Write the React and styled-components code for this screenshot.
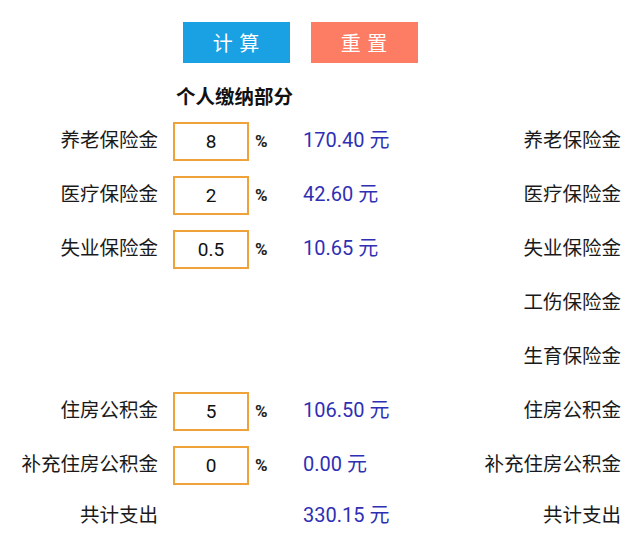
import React, { useState } from "react";
import styled, { createGlobalStyle } from "styled-components";

const GlobalStyle = createGlobalStyle`
  body {
    margin: 0;
    background: #ffffff;
    font-family: Roboto, "Noto Sans CJK SC", sans-serif;
  }
`;

const rows = [
    { label: "养老保险金", rate: "8", amount: "170.40 元" },
    { label: "医疗保险金", rate: "2", amount: "42.60 元" },
    { label: "失业保险金", rate: "0.5", amount: "10.65 元" },
    { right: "工伤保险金" },
    { right: "生育保险金" },
    { label: "住房公积金", rate: "5", amount: "106.50 元" },
    { label: "补充住房公积金", rate: "0", amount: "0.00 元" },
    { label: "共计支出", amount: "330.15 元", total: true },
];

export default function App() {
    const [values, setValues] = useState(rows.map((r) => r.rate));

    return (
        <Page>
            <GlobalStyle />
            <ButtonBar>
                <ActionButton $color="#19a1e4">计 算</ActionButton>
                <ActionButton $color="#fd7c64">重 置</ActionButton>
            </ButtonBar>
            <Heading>个人缴纳部分</Heading>
            {rows.map((r, i) => (
                <Row key={i} $total={r.total}>
                    <Label>{r.label}</Label>
                    <Cell>
                        {r.rate !== undefined && (
                            <RateInput
                                value={values[i]}
                                onChange={(e) => {
                                    const next = [...values];
                                    next[i] = e.target.value;
                                    setValues(next);
                                }}
                            />
                        )}
                    </Cell>
                    <Percent>{r.rate !== undefined ? "%" : ""}</Percent>
                    <Amount>{r.amount}</Amount>
                    <RightLabel>{r.right || r.label}</RightLabel>
                </Row>
            ))}
        </Page>
    );
}

const Page = styled.div`
    width: 624px;
    padding-top: 22px;
`;

const ButtonBar = styled.div`
    display: flex;
    gap: 21px;
    padding-left: 183px;
`;

const ActionButton = styled.button`
    width: 107px;
    height: 41px;
    border: none;
    background-color: ${(p) => p.$color};
    color: #ffffff;
    font-family: "Noto Sans CJK SC", sans-serif;
    font-size: 20px;
    letter-spacing: 1px;
    padding: 0;
    cursor: pointer;
`;

const Heading = styled.div`
    box-sizing: border-box;
    height: 51px;
    padding-top: 13px;
    display: flex;
    align-items: center;
    padding-left: 176px;
    font-family: "Noto Sans CJK SC", sans-serif;
    font-weight: 700;
    font-size: 19.5px;
    color: #111;
`;

const Row = styled.div`
    display: grid;
    grid-template-columns: 173px 76px 54px 1fr auto;
    align-items: center;
    height: ${(p) => (p.$total ? "48px" : "54px")};
    padding-right: 3px;
`;

const Label = styled.div`
    text-align: right;
    padding-right: 15px;
    font-family: "Noto Sans CJK SC", sans-serif;
    font-size: 19.5px;
    color: #1a1a1a;
    margin-top: -5px;
`;

const RightLabel = styled(Label)`
    padding-right: 0;
`;

const Cell = styled.div`
    display: flex;
`;

const RateInput = styled.input`
    box-sizing: border-box;
    width: 76px;
    height: 39px;
    border: 2px solid #f0a23a;
    outline: none;
    text-align: center;
    font-family: Roboto, sans-serif;
    font-size: 19px;
    color: #111;
    background: #fff;
    padding: 0;
`;

const Percent = styled.div`
    padding-left: 6px;
    font-family: Roboto, sans-serif;
    font-weight: 700;
    font-size: 17px;
    color: #222;
`;

const Amount = styled.div`
    font-family: Roboto, "Noto Sans CJK SC", sans-serif;
    font-size: 20px;
    color: #2f2fb4;
    margin-top: -5px;
`;
